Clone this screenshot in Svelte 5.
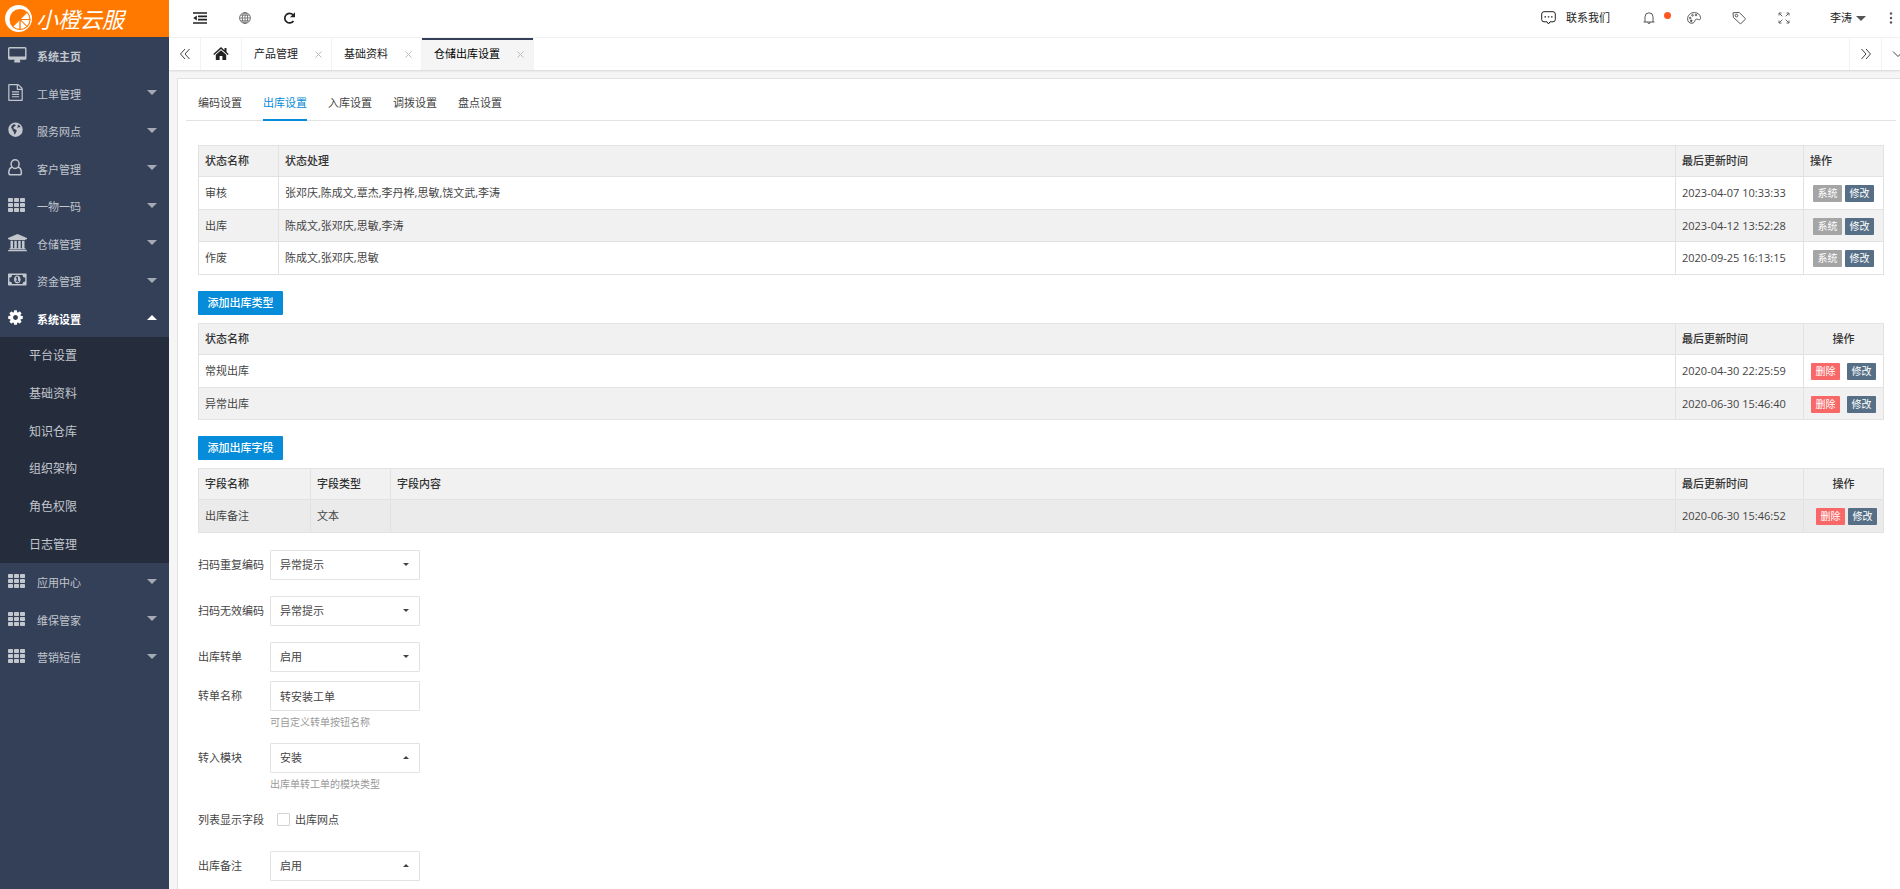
<script>
  const menu = [
    { name: '系统主页', icon: 'desktop', leaf: true },
    { name: '工单管理', icon: 'file' },
    { name: '服务网点', icon: 'globe' },
    { name: '客户管理', icon: 'user' },
    { name: '一物一码', icon: 'grid' },
    { name: '仓储管理', icon: 'bank' },
    { name: '资金管理', icon: 'money' },
    {
      name: '系统设置',
      icon: 'cog',
      open: true,
      children: ['平台设置', '基础资料', '知识仓库', '组织架构', '角色权限', '日志管理']
    },
    { name: '应用中心', icon: 'grid' },
    { name: '维保管家', icon: 'grid' },
    { name: '营销短信', icon: 'grid' }
  ];

  const pages = [
    { name: '产品管理' },
    { name: '基础资料' },
    { name: '仓储出库设置', active: true }
  ];

  const sections = ['编码设置', '出库设置', '入库设置', '调拨设置', '盘点设置'];
  let section = $state('出库设置');

  const statuses = [
    ['审核', '张邓庆,陈成文,覃杰,李丹桦,思敏,饶文武,李涛', '2023-04-07 10:33:33'],
    ['出库', '陈成文,张邓庆,思敏,李涛', '2023-04-12 13:52:28'],
    ['作废', '陈成文,张邓庆,思敏', '2020-09-25 16:13:15']
  ];
  const types = [
    ['常规出库', '2020-04-30 22:25:59'],
    ['异常出库', '2020-06-30 15:46:40']
  ];
  const fields = [['出库备注', '文本', '', '2020-06-30 15:46:52']];
</script>

{#snippet icon(name)}
  <svg class="mi" viewBox="0 0 20 18" aria-hidden="true">
    {#if name === 'desktop'}
      <path fill-rule="evenodd" d="M1.600 1h15.300A1.600 1.600 0 0 1 18.500 2.600v9.600a1.600 1.600 0 0 1-1.600 1.600h-5.100c0 1 .6 1.300.6 1.900 0 .5-.3.800-.7.800H6.800c-.4 0-.7-.3-.7-.8 0-.6.600-.9.600-1.900H1.600A1.600 1.600 0 0 1 0 12.200V2.600A1.600 1.600 0 0 1 1.600 1zm.2 1.400c-.2 0-.4.200-.4.400v7.200c0 .2.200.4.400.4h14.900c.2 0 .4-.2.4-.4V2.800c0-.2-.2-.4-.4-.4z" />
    {:else if name === 'file'}
      <svg x="-1" y="0" width="17" height="17" viewBox="0 0 1792 1792">
        <path d="M1596 380q28 28 48 76t20 88v1152q0 40-28 68t-68 28h-1344q-40 0-68-28t-28-68v-1600q0-40 28-68t68-28h896q40 0 88 20t76 48zm-444-244v376h376q-10-29-22-41l-313-313q-12-12-41-22zm384 1528v-1024h-416q-40 0-68-28t-28-68v-416h-768v1536h1280zm-1024-864q0-14 9-23t23-9h704q14 0 23 9t9 23v64q0 14-9 23t-23 9h-704q-14 0-23-9t-9-23v-64zm736 224q14 0 23 9t9 23v64q0 14-9 23t-23 9h-704q-14 0-23-9t-9-23v-64q0-14 9-23t23-9h704zm0 256q14 0 23 9t9 23v64q0 14-9 23t-23 9h-704q-14 0-23-9t-9-23v-64q0-14 9-23t23-9h704z" />
      </svg>
    {:else if name === 'globe'}
      <path fill-rule="evenodd" d="M7.500 1.500a7.200 7.200 0 1 1 0 14.400 7.200 7.200 0 0 1 0-14.400zM5.700 3.300c.8.300 1.600.2 2 .9-.2.700-.9.900-1.300 1.400-.4.600-1 .8-1.200 1.500.1.600.9.500 1.300.9.800.6 1.900.6 2.200 1.600.1 1-.6 1.600-1 2.400-.3.600-.5 1.300-1.100 1.600-.6-.9-.4-2-.9-2.900-.5-.8-1.300-1.300-1.400-2.300 0-.7-.6-1.100-1.200-1.500.1-1.500 1.100-2.900 2.600-3.600zM10 3.500c1.200.6 2.100 1.500 2.600 2.700-.7.200-1.300-.2-1.900.1-.5.300-.9.700-1.300.2-.2-.6.400-1 .7-1.400-.3-.5-.5-1-.1-1.600z" />
    {:else if name === 'user'}
      <path fill="none" stroke="currentColor" stroke-width="1.500" d="M4 8.200C.8 9 .8 11.400.8 13.900c0 1 .8 1.800 1.900 1.800h8.800c1.100 0 1.900-.8 1.900-1.800 0-2.500 0-4.900-3.200-5.700M7.100.8a4 4 0 0 1 4 4c0 2.500-1.700 4.700-4 4.700s-4-2.200-4-4.700a4 4 0 0 1 4-4z" />
    {:else if name === 'grid'}
      {#each [2, 7, 12] as y}
        {#each [0, 6, 12] as x}
          <rect {x} {y} width="5" height="4" rx=".8" />
        {/each}
      {/each}
    {:else if name === 'bank'}
      <path d="M9.500 0 19 4v1.300h-1.300c0 .4-.3.700-.7.700H2c-.4 0-.7-.3-.7-.7H0V4zM2.500 6.700H5v7.600h1.300V6.700h2.500v7.600h1.400V6.700h2.500v7.600H14V6.700h2.500v7.600h.5c.4 0 .7.300.7.700v.6H1.300V15c0-.4.300-.7.7-.7h.5zM.7 16h17.600c.4 0 .7.300.7.700v.6H0v-.6c0-.4.300-.7.7-.7z" />
    {:else if name === 'money'}
      <path fill-rule="evenodd" d="M.7 2.500h17.200c.4 0 .7.300.7.700v10.600c0 .4-.3.700-.7.700H.7c-.4 0-.7-.3-.7-.7V3.200c0-.4.300-.7.700-.7zM4 3.900a2.700 2.700 0 0 1-2.600 2.700v3.800A2.700 2.700 0 0 1 4 13.100h10.600a2.700 2.700 0 0 1 2.600-2.700V6.600a2.700 2.700 0 0 1-2.600-2.700zm5.300.7c2.100 0 3.300 1.900 3.300 3.900s-1.200 3.900-3.300 3.900S6 10.500 6 8.500s1.200-3.900 3.300-3.900zm-1.700 2 .7.800.4-.3v2.700h-1v1H11v-1h-1V5.700H9z" />
    {:else}
      <svg x="-1" y="0" width="17" height="17" viewBox="0 0 1792 1792">
        <path d="M1152 896q0-106-75-181t-181-75-181 75-75 181 75 181 181 75 181-75 75-181zm512-109v222q0 12-8 23t-20 13l-185 28q-19 54-39 91 35 50 107 138 10 12 10 25t-9 23q-27 37-99 108t-94 71q-12 0-26-9l-138-108q-44 23-91 38-16 136-29 186-7 28-36 28h-222q-14 0-24.500-8.500t-11.500-21.500l-28-184q-49-16-90-37l-141 107q-10 9-25 9-14 0-25-11-126-114-165-168-7-10-7-23 0-12 8-23 15-21 51-66.500t54-70.500q-27-50-41-99l-183-27q-13-2-21-12.500t-8-23.500v-222q0-12 8-23t19-13l186-28q14-46 39-92-40-57-107-138-10-12-10-24 0-10 9-23 26-36 98.500-107.500t94.500-71.500q13 0 26 10l138 107q44-23 91-38 16-136 29-186 7-28 36-28h222q14 0 24.500 8.500t11.500 21.500l28 184q49 16 90 37l142-107q9-9 24-9 13 0 25 10 129 119 165 170 7 8 7 22 0 12-8 23-15 21-51 66.500t-54 70.500q26 50 41 98l183 28q13 2 21 12.500t8 23.500z" />
      </svg>
    {/if}
  </svg>
{/snippet}

{#snippet dropdown(id, label, options, up)}
  <div class="row">
    <label for={id}>{label}</label>
    <div class="select" class:up>
      <select {id}>
        {#each options as o}<option>{o}</option>{/each}
      </select>
    </div>
  </div>
{/snippet}

<div class="app">
  <aside>
    <a class="logo" href="#home">
      <svg viewBox="0 0 28 28" aria-hidden="true">
        <circle cx="13.500" cy="13.500" r="13.500" fill="#fff" />
        <circle cx="15" cy="14.500" r="10.500" fill="#ff7800" />
        <path fill="#fff" stroke="#ff7800" stroke-width=".9" d="M15 14.500 22 7.500a9.900 9.900 0 0 1 2.900 7zM15 14.500h9.900a9.900 9.900 0 0 1-2.900 7zM15 14.500l7 7a9.900 9.900 0 0 1-7 2.900zM15 14.500v9.900a9.900 9.900 0 0 1-7-2.900z" />
      </svg>
      <span>小橙云服</span>
    </a>
    <nav>
      <ul class="menu">
        {#each menu as item}
          <li class:open={item.open}>
            <a class="item" class:leaf={item.leaf} href="#menu">
              {@render icon(item.icon)}
              <span>{item.name}</span>
              {#if !item.leaf}<i class="caret"></i>{/if}
            </a>
            {#if item.children}
              <ul class="sub">
                {#each item.children as child}
                  <li><a href="#sub">{child}</a></li>
                {/each}
              </ul>
            {/if}
          </li>
        {/each}
      </ul>
    </nav>
  </aside>

  <div class="body">
    <header>
      <button class="tool" aria-label="收起菜单">
        <svg viewBox="0 0 14 12"><path stroke="#222" stroke-width="1.700" d="M0 1h14M5 4.300h9M5 7.600h9M0 11h14" /><path fill="#222" d="M3.800 3.500v5L.3 6z" /></svg>
      </button>
      <button class="tool" aria-label="网站">
        <svg viewBox="0 0 14 12" fill="none" stroke="#666" stroke-width=".9"><circle cx="7" cy="6" r="5.400" /><ellipse cx="7" cy="6" rx="2.700" ry="5.400" /><path d="M7 .6v10.800M1.600 6h10.800M2.500 3.200h9M2.500 8.800h9" stroke-width=".8" /></svg>
      </button>
      <button class="tool" aria-label="刷新">
        <svg viewBox="0 0 14 12"><path fill="none" stroke="#222" stroke-width="1.700" d="M10.500 8.900A4.800 4.800 0 1 1 9.900 2.600" /><path fill="#222" d="M12 .3v5H7z" /></svg>
      </button>

      <a class="contact" href="#contact">
        <svg viewBox="0 0 15 14"><path fill="none" stroke="#222" d="M3 .7h9A2.300 2.300 0 0 1 14.300 3v5.500a2.300 2.300 0 0 1-2.300 2.300H9L7.500 13 6 10.800H3A2.300 2.300 0 0 1 .7 8.500V3A2.300 2.300 0 0 1 3 .7z" /><path fill="#222" d="M3.500 5.200H5v1.300H3.500zM6.800 5.200h1.500v1.300H6.800zM10 5.200h1.500v1.300H10z" /></svg>
        联系我们
      </a>
      <button class="tool bell" aria-label="消息">
        <svg viewBox="0 0 14 12" fill="none" stroke="#444" stroke-width=".9"><path d="M1.500 10h11M3 10V4.800a4 4 0 0 1 8 0V10M5.600 10.300c.2 1.600 2.600 1.600 2.800 0" /></svg>
        <i class="dot"></i>
      </button>
      <button class="tool" aria-label="主题">
        <svg viewBox="0 0 14 12" fill="none" stroke="#444" stroke-width=".9"><path d="M5 11.200C2 11.400.5 9.300.6 6.700.7 3.200 3.700.6 7.300.6c3.500 0 6 2.100 6.200 4.900.1 2-.9 2.600-2 2.100-1.700-.9-3.300-.4-3.600 1-.3 1.500-1.200 2.500-2.900 2.600z" /><circle cx="3.200" cy="6" r=".8" /><circle cx="5.500" cy="3.300" r=".8" /><circle cx="9" cy="3" r=".8" /><circle cx="4.300" cy="8.800" r=".8" fill="#444" /></svg>
      </button>
      <button class="tool" aria-label="便签">
        <svg viewBox="0 0 14 12" fill="none" stroke="#444" stroke-width=".9"><path d="M1 .8 7.200.4l6 6a.8.800 0 0 1 0 1l-4.200 4.100a.8.800 0 0 1-1 0L1.400 5.400z" /><circle cx="4.500" cy="3.600" r="1.300" /></svg>
      </button>
      <button class="tool" aria-label="全屏">
        <svg viewBox="0 0 14 12" fill="none" stroke="#666" stroke-width="1"><path d="M2 3.500V1h2.500M2 1l3.300 3.300M12 3.500V1H9.500M12 1 8.700 4.300M2 8.500V11h2.500M2 11l3.300-3.300M12 8.500V11H9.500M12 11 8.700 7.700" /></svg>
      </button>
      <button class="account">李涛<i class="caret"></i></button>
      <button class="more" aria-label="更多">
        <svg viewBox="0 0 4 12" fill="#555"><circle cx="2" cy="1.500" r="1.200" /><circle cx="2" cy="6" r="1.200" /><circle cx="2" cy="10.500" r="1.200" /></svg>
      </button>
    </header>

    <div class="pages">
      <button class="step" aria-label="向左">
        <svg viewBox="0 0 12 12"><path d="M6 1 1.500 6 6 11M10.500 1 6 6l4.500 5" /></svg>
      </button>
      <a class="home" href="#home" aria-label="主页">
        <svg viewBox="0 0 16 14"><path fill="#222" d="M8 0 .3 7l.9 1L8 2l6.800 6 .9-1-2.200-2V1h-2v2.200zM8 3.200 2.800 7.800V13h3.800V9h2.800v4h3.800V7.800z" /></svg>
      </a>
      {#each pages as p}
        <div class="page" class:active={p.active}>
          <a href="#page">{p.name}</a>
          <button aria-label="关闭{p.name}"><svg viewBox="0 0 7 7"><path d="m.5.500 6 6m0-6-6 6" /></svg></button>
        </div>
      {/each}
      <button class="step right" aria-label="向右">
        <svg viewBox="0 0 12 12"><path d="M1.500 1 6 6l-4.500 5M6 1l4.500 5L6 11" /></svg>
      </button>
      <button class="step last" aria-label="页签操作">
        <svg viewBox="0 0 12 12"><path d="M1 3.500 6 8.500l5-5" /></svg>
      </button>
    </div>

    <main>
      <section class="card">
        <nav class="tabs">
          {#each sections as s}
            <button class:active={s === section} onclick={() => (section = s)}>{s}</button>
          {/each}
        </nav>

        <div class="content">
          <table>
            <colgroup><col class="w80" /><col /><col class="w128" /><col class="w80" /></colgroup>
            <thead><tr><th>状态名称</th><th>状态处理</th><th>最后更新时间</th><th>操作</th></tr></thead>
            <tbody>
              {#each statuses as r}
                <tr>
                  {#each r as c}<td>{c}</td>{/each}
                  <td><div class="ops tight"><button class="gray">系统</button><button>修改</button></div></td>
                </tr>
              {/each}
            </tbody>
          </table>

          <button class="add">添加出库类型</button>
          <table>
            <colgroup><col /><col class="w128" /><col class="w80" /></colgroup>
            <thead><tr><th>状态名称</th><th>最后更新时间</th><th class="mid">操作</th></tr></thead>
            <tbody>
              {#each types as r}
                <tr>
                  {#each r as c}<td>{c}</td>{/each}
                  <td><div class="ops"><button class="red">删除</button><button>修改</button></div></td>
                </tr>
              {/each}
            </tbody>
          </table>

          <button class="add">添加出库字段</button>
          <table>
            <colgroup><col class="w112" /><col class="w80" /><col /><col class="w128" /><col class="w80" /></colgroup>
            <thead><tr><th>字段名称</th><th>字段类型</th><th>字段内容</th><th>最后更新时间</th><th class="mid">操作</th></tr></thead>
            <tbody>
              {#each fields as r}
                <tr class="hover">
                  {#each r as c}<td>{c}</td>{/each}
                  <td><div class="ops tight end"><button class="red">删除</button><button>修改</button></div></td>
                </tr>
              {/each}
            </tbody>
          </table>

          <form>
            {@render dropdown('repeat', '扫码重复编码', ['异常提示'], false)}
            {@render dropdown('invalid', '扫码无效编码', ['异常提示'], false)}
            {@render dropdown('transfer', '出库转单', ['启用', '停用'], false)}
            <div class="row near">
              <label for="title">转单名称</label>
              <input id="title" type="text" value="转安装工单" />
            </div>
            <p>可自定义转单按钮名称</p>
            {@render dropdown('module', '转入模块', ['安装'], true)}
            <p>出库单转工单的模块类型</p>
            <div class="row near">
              <span class="label">列表显示字段</span>
              <label class="check"><input type="checkbox" />出库网点</label>
            </div>
            {@render dropdown('remark', '出库备注', ['启用', '停用'], true)}
          </form>
        </div>
      </section>
    </main>
  </div>
</div>

<style>
  :global(body) {
    overflow: hidden;
  }
  .app {
    display: flex;
    height: 100vh;
    font: 11px/16px "Open Sans", "Noto Sans CJK SC", sans-serif;
    color: #444;
    background: #f5f5f5;
  }
  .app :global(*) {
    box-sizing: border-box;
  }
  button,
  input,
  select {
    font: inherit;
    color: inherit;
    margin: 0;
    padding: 0;
    border: 0;
    background: none;
  }
  button {
    cursor: pointer;
  }
  a {
    color: inherit;
    text-decoration: none;
  }
  ul {
    margin: 0;
    padding: 0;
    list-style: none;
  }
  svg {
    display: block;
    flex: none;
  }

  aside {
    flex: none;
    width: 169px;
    background: #344058;
    color: #c2c6cd;
    overflow: hidden;
  }
  .logo {
    display: flex;
    align-items: center;
    gap: 3px;
    height: 37px;
    padding-left: 5px;
    background: #ff7800;
    color: #fff;
    font-size: 22px;
    font-style: italic;
    line-height: 36px;
  }
  .logo svg {
    width: 28px;
    height: 28px;
  }
  .item {
    display: flex;
    align-items: center;
    height: 38px;
    padding: 0 12px 2px 8px;
  }
  .menu > li:nth-child(even) > .item,
  .sub li:nth-child(3n) a {
    height: 37px;
  }
  .item.leaf {
    font-weight: 700;
  }
  .item span {
    flex: 1;
    padding-top: 4px;
  }
  .mi {
    width: 20px;
    height: 18px;
    margin-right: 9px;
    fill: currentColor;
  }
  .caret {
    border: 5px solid transparent;
    border-top-color: currentColor;
    border-bottom-width: 0;
  }
  .item .caret {
    opacity: 0.8;
  }
  .open .item {
    color: #fff;
    font-weight: 700;
  }
  .open .caret {
    border-width: 0 5px 5px;
    border-bottom-color: currentColor;
    opacity: 1;
  }
  .sub {
    background: #252d3d;
    font-size: 12px;
  }
  .sub a {
    display: flex;
    align-items: center;
    height: 38px;
    padding-left: 29px;
  }

  .body {
    flex: 1;
    min-width: 0;
    display: flex;
    flex-direction: column;
  }
  header {
    flex: none;
    display: flex;
    align-items: center;
    height: 38px;
    padding: 0 0 1px 8px;
    background: #fff;
    border-bottom: 1px solid #f3f3f3;
    color: #222;
  }
  .tool {
    width: 45px;
    height: 36px;
    display: flex;
    align-items: center;
    justify-content: center;
  }
  .tool svg {
    width: 14px;
    height: 12px;
    overflow: visible;
  }
  .bell {
    position: relative;
  }
  .dot {
    position: absolute;
    top: 12px;
    right: 0;
    width: 7px;
    height: 7px;
    border-radius: 50%;
    background: #ff5722;
  }
  .contact {
    display: flex;
    align-items: center;
    gap: 10px;
    margin-left: auto;
    padding-right: 16px;
  }
  .contact svg {
    width: 15px;
    height: 14px;
  }
  .account {
    display: flex;
    align-items: center;
    justify-content: flex-end;
    gap: 4px;
    width: 76px;
    padding-right: 16px;
  }
  .account .caret {
    color: #555;
  }
  .more {
    width: 18px;
    display: flex;
    justify-content: center;
  }
  .more svg {
    width: 4px;
    height: 12px;
  }

  .pages {
    flex: none;
    display: flex;
    height: 32px;
    background: #fff;
    box-shadow: 0 1px 2px rgba(0, 0, 0, 0.12);
    color: #222;
  }
  .step,
  .home {
    display: flex;
    align-items: center;
    justify-content: center;
    width: 32px;
    border-right: 1px solid #f3f3f3;
  }
  .step svg {
    width: 12px;
    height: 12px;
    fill: none;
    stroke: #444;
  }
  .home {
    width: 41px;
  }
  .home svg {
    width: 16px;
    height: 14px;
  }
  .page {
    display: flex;
    align-items: center;
    justify-content: space-between;
    gap: 17px;
    padding: 0 9px 0 12px;
    border-right: 1px solid #f3f3f3;
  }
  .page svg {
    width: 7px;
    height: 7px;
    fill: none;
    stroke: #bbb;
  }
  .page.active {
    background: #f5f5f5;
    box-shadow: inset 0 2px #344058;
    color: #000;
  }
  .step.right {
    width: 33px;
    margin-left: auto;
    border-left: 1px solid #f3f3f3;
  }
  .step.last {
    width: 18px;
    padding-left: 10px;
    overflow: hidden;
    justify-content: flex-start;
    border: 0;
  }

  main {
    flex: 1;
    min-height: 0;
    display: flex;
    padding: 8px 0 0 8px;
    overflow: hidden;
  }
  .card {
    flex: 1;
    min-width: 0;
    padding: 0 4px 0 8px;
    background: #fff;
    border: solid #e2e2e2;
    border-width: 1px 0 0 1px;
  }
  .tabs {
    display: flex;
    gap: 21px;
    height: 42px;
    padding-left: 12px;
    border-bottom: 1px solid #e2e2e2;
  }
  .tabs button {
    height: 42px;
    padding-top: 8px;
    border-bottom: 2px solid transparent;
  }
  .tabs .active {
    color: #068cd9;
    border-color: #068cd9;
  }
  .content {
    padding: 24px 12px 0;
  }

  table {
    width: 100%;
    table-layout: fixed;
    border-collapse: collapse;
  }
  .w80 {
    width: 80px;
  }
  .w112 {
    width: 112px;
  }
  .w128 {
    width: 128px;
  }
  th,
  td {
    height: 33px;
    padding: 0 6px;
    border: 1px solid #e2e2e2;
    text-align: left;
  }
  th {
    height: 31px;
    background: #f1f1f1;
    color: #333;
    font-weight: 500;
  }
  th.mid {
    text-align: center;
  }
  tbody tr:nth-child(even) td {
    height: 32px;
    background: #f1f1f1;
  }
  tr.hover td {
    background: #ebebeb;
  }
  .ops {
    display: flex;
    justify-content: center;
    gap: 7px;
    padding-top: 1px;
  }
  .ops.tight {
    gap: 3px;
  }
  .ops.end {
    justify-content: flex-end;
  }
  .ops button {
    width: 29px;
    height: 17px;
    border-radius: 1px;
    background: #566f87;
    color: #fff;
    font-size: 10px;
    line-height: 17px;
  }
  .ops .gray {
    background: #a5a5a5;
  }
  .ops .red {
    background: #f96868;
  }
  .add {
    display: block;
    height: 24px;
    min-width: 85px;
    margin: 16px 0 8px;
    padding: 0 9px;
    border-radius: 1px;
    background: #068cd9;
    color: #fff;
    font-weight: 500;
  }

  form {
    padding-top: 16px;
  }
  .row {
    display: flex;
    align-items: center;
    height: 31px;
    margin-bottom: 15px;
  }
  .row:has(+ .near) {
    margin-bottom: 8px;
  }
  .row:has(+ p) {
    margin-bottom: 0;
  }
  .row > label:first-child,
  .label {
    width: 72px;
    white-space: nowrap;
  }
  .select {
    position: relative;
  }
  select,
  input[type='text'] {
    display: block;
    width: 150px;
    height: 30px;
    padding: 0 9px;
    border: 1px solid #e2e2e2;
    border-radius: 1px;
    background: #fff;
    appearance: none;
  }
  .select::after {
    content: '';
    position: absolute;
    top: 13px;
    right: 11px;
    border: 3px solid transparent;
    border-top-color: #444;
    border-bottom-width: 0;
    pointer-events: none;
  }
  .select.up::after {
    border-width: 0 3px 3px;
    border-bottom-color: #444;
  }
  form p {
    margin: 0 0 8px 72px;
    color: #999;
    font-size: 10px;
    line-height: 23px;
  }
  .check {
    display: flex;
    align-items: center;
    gap: 5px;
    padding-left: 7px;
  }
  .check input {
    width: 13px;
    height: 13px;
    border: 1px solid #d2d2d2;
    border-radius: 1px;
    appearance: none;
  }
</style>
